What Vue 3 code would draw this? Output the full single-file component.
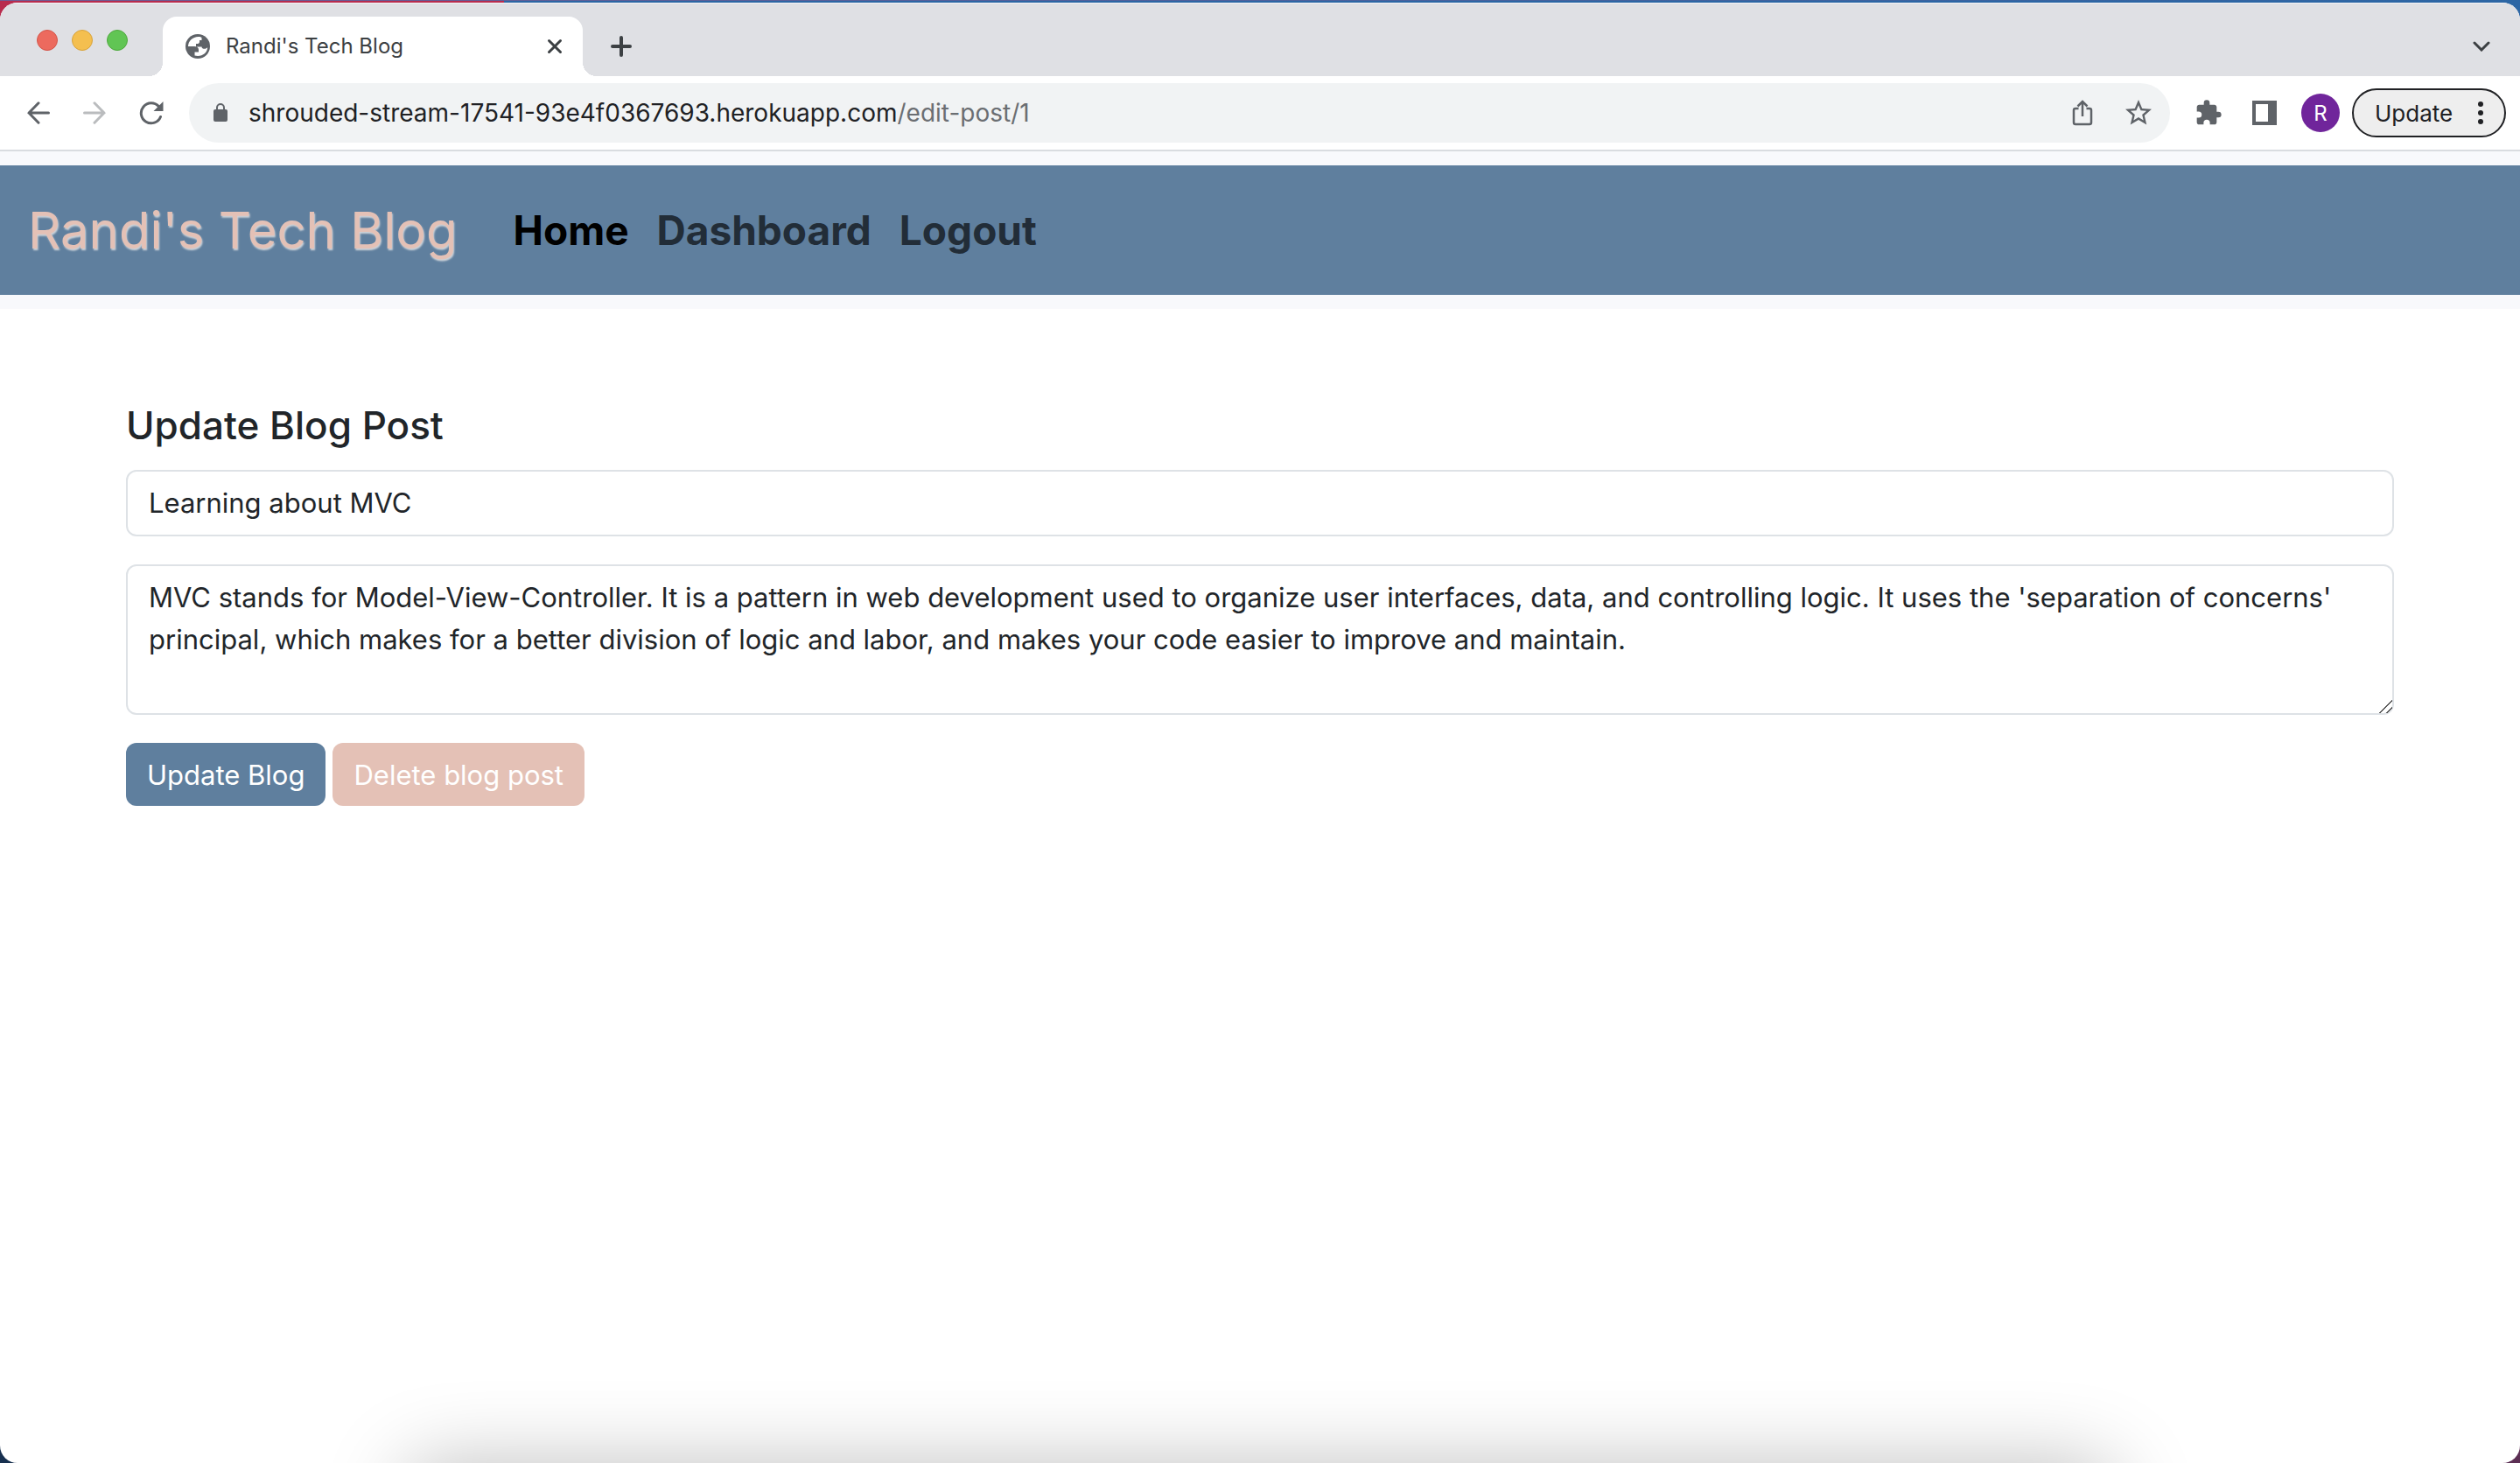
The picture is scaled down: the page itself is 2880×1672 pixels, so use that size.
<script setup>
import { ref } from 'vue'

const title = ref('Learning about MVC')
const body = ref("MVC stands for Model-View-Controller. It is a pattern in web development used to organize user interfaces, data, and controlling logic. It uses the 'separation of concerns' principal, which makes for a better division of logic and labor, and makes your code easier to improve and maintain.")
</script>

<template>
  <div class="desktop">
    <div class="window">
      <header class="tabstrip">
        <div class="lights">
          <button class="light red" aria-label="Close window"></button>
          <button class="light yellow" aria-label="Minimise window"></button>
          <button class="light green" aria-label="Zoom window"></button>
        </div>
        <div class="tab">
          <svg class="globe" viewBox="0 0 28 28" aria-hidden="true">
            <circle cx="14" cy="14" r="14" fill="#5f6368" />
            <path d="M16.500 3C9 2 3 7.500 3 14H10C13 14 15 15.500 15 18V20.500H10.500V24.500C18 26.500 25 22 25.200 15C24 17.500 18.500 17.500 18.500 14.500H12V11C14.500 11.200 16 10.500 16 8.500V7H18.500V4Z" fill="#fff" />
          </svg>
          <span class="tab-title">Randi's Tech Blog</span>
          <button class="icon-btn" aria-label="Close tab">
            <svg width="18" height="18" viewBox="0 0 18 18"><path d="M2.500 2.500L15.500 15.500M15.500 2.500L2.500 15.500" stroke="#3c4043" stroke-width="3" stroke-linecap="round" /></svg>
          </button>
        </div>
        <button class="icon-btn new-tab" aria-label="New tab">
          <svg width="24" height="24" viewBox="0 0 24 24"><path d="M12 2V22M2 12H22" stroke="#3c4043" stroke-width="4" stroke-linecap="round" /></svg>
        </button>
        <button class="icon-btn tab-search" aria-label="Search tabs">
          <svg width="20" height="12" viewBox="0 0 20 12"><path d="M2 2L10 10L18 2" fill="none" stroke="#3c4043" stroke-width="3" stroke-linecap="round" /></svg>
        </button>
      </header>

      <div class="toolbar">
        <div class="nav-icons">
          <button class="icon-btn" aria-label="Back">
            <svg width="26" height="26" viewBox="0 0 26 26"><path d="M24.500 13H2M13 1.800L2 13L13 24.200" fill="none" stroke="#5f6368" stroke-width="3" stroke-linecap="round" /></svg>
          </button>
          <button class="icon-btn" aria-label="Forward">
            <svg width="26" height="26" viewBox="0 0 26 26"><path d="M1.500 13H24M13 1.800L24 13L13 24.200" fill="none" stroke="#babcbe" stroke-width="3" stroke-linecap="round" /></svg>
          </button>
          <button class="icon-btn" aria-label="Reload">
            <svg width="28" height="28" viewBox="0 0 28 28"><path d="M24.500 18.500A11.500 11.500 0 1 1 22.500 6.800" fill="none" stroke="#5f6368" stroke-width="3" stroke-linecap="round" /><path d="M27.500 1V12H16.500Z" fill="#5f6368" /></svg>
          </button>
        </div>
        <div class="omnibox">
          <svg class="lock" width="18" height="22" viewBox="0 0 18 22"><rect x="1" y="7" width="16" height="14" rx="2" fill="#5f6368" /><path d="M5 8V5A4 4 0 0 1 13 5V8" fill="none" stroke="#5f6368" stroke-width="2" /></svg>
          <a class="url" href="#">shrouded-stream-17541-93e4f0367693.herokuapp.com<span class="path">/edit-post/1</span></a>
          <button class="icon-btn" aria-label="Share">
            <svg width="24" height="30" viewBox="0 0 24 30"><path d="M7.500 10H4A2 2 0 0 0 2 12V26A2 2 0 0 0 4 28H20A2 2 0 0 0 22 26V12A2 2 0 0 0 20 10H16.500M12 19V2M6.500 7.500L12 2L17.500 7.500" fill="none" stroke="#5f6368" stroke-width="2.500" /></svg>
          </button>
          <button class="icon-btn star" aria-label="Bookmark">
            <svg width="36" height="36" viewBox="0 0 24 24"><path d="M22 9.240l-7.190-.62L12 2 9.190 8.630 2 9.240l5.460 4.730L5.820 21 12 17.270 18.180 21l-1.630-7.030L22 9.240zM12 15.400l-3.760 2.270 1-4.280-3.320-2.880 4.380-.38L12 6.100l1.710 4.040 4.380.38-3.320 2.880 1 4.280L12 15.400z" fill="#5f6368" /></svg>
          </button>
        </div>
        <div class="actions">
          <button class="icon-btn puzzle" aria-label="Extensions">
            <svg width="32" height="32" viewBox="0 0 24 24"><path d="M20.500 11H19V7c0-1.100-.9-2-2-2h-4V3.500a2.500 2.500 0 0 0-5 0V5H4c-1.100 0-1.990.9-1.990 2v3.800H3.500a2.700 2.700 0 0 1 0 5.400H2V20c0 1.100.9 2 2 2h3.800v-1.500a2.700 2.700 0 0 1 5.400 0V22H17c1.100 0 2-.9 2-2v-4h1.500a2.500 2.500 0 0 0 0-5z" fill="#5f6368" /></svg>
          </button>
          <button class="icon-btn panel" aria-label="Side panel">
            <svg width="28" height="28" viewBox="0 0 28 28"><path d="M0 0H28V28H0ZM4 4V24H18V4Z" fill="#5f6368" fill-rule="evenodd" /></svg>
          </button>
          <button class="avatar" aria-label="Profile">R</button>
          <button class="update">
            Update
            <svg width="6" height="26" viewBox="0 0 6 26"><g fill="#202124"><circle cx="3" cy="3" r="3" /><circle cx="3" cy="13" r="3" /><circle cx="3" cy="23" r="3" /></g></svg>
          </button>
        </div>
      </div>

      <nav class="site-nav">
        <div class="site-bar">
          <a class="brand" href="#">Randi's Tech Blog</a>
          <a class="nav-link active" href="#">Home</a>
          <a class="nav-link" href="#">Dashboard</a>
          <a class="nav-link" href="#">Logout</a>
        </div>
      </nav>

      <main>
        <form @submit.prevent>
          <h1>Update Blog Post</h1>
          <input v-model="title" class="field" type="text" aria-label="Post title" />
          <textarea v-model="body" class="field" rows="3" aria-label="Post content"></textarea>
          <div class="buttons">
            <button class="btn primary" type="submit">Update Blog</button>
            <button class="btn danger" type="button">Delete blog post</button>
          </div>
        </form>
      </main>
      <div class="dock-shadow"></div>
    </div>
  </div>
</template>

<style>
body {
  margin: 0;
}
</style>

<style scoped>
* {
  box-sizing: border-box;
}
.desktop {
  min-height: 100vh;
  padding-top: 3px;
  display: flex;
  background:
    linear-gradient(90deg, #6f5c93, #2c66a4) top / 100% 1px no-repeat,
    linear-gradient(90deg, #b82c4e 0 20%, #2c66a4 20%) top / 100% 50% no-repeat,
    linear-gradient(90deg, #17304f 50%, #5c2f54 50%) bottom / 100% 50% no-repeat;
  font-family: Inter, "Liberation Sans", sans-serif;
  color: #212529;
}
.window {
  position: relative;
  flex: 1;
  display: flex;
  flex-direction: column;
  overflow: hidden;
  border-radius: 20px;
  background: #fff;
}
button {
  font-family: inherit;
  border: 0;
  padding: 0;
  margin: 0;
}
a {
  color: inherit;
  text-decoration: none;
}
svg {
  display: block;
  flex: none;
}
.icon-btn {
  background: none;
  display: flex;
  flex: none;
}
.tabstrip {
  height: 84px;
  display: flex;
  align-items: flex-end;
  background: #dfe0e4;
  border-top: 1px solid #f2f3f5;
}
.lights {
  display: flex;
  gap: 16px;
  padding: 0 40px 29px 42px;
}
.light {
  width: 24px;
  height: 24px;
  border-radius: 50%;
}
.red { background: #ec6a5e; border: 1px solid #d35549; }
.yellow { background: #f4bf4f; border: 1px solid #d8a33c; }
.green { background: #61c554; border: 1px solid #4fa83e; }
.tab {
  position: relative;
  width: 480px;
  height: 68px;
  padding: 0 23px 0 26px;
  display: flex;
  align-items: center;
  border-radius: 16px 16px 0 0;
  background: #fff;
}
.tab::before,
.tab::after {
  content: "";
  position: absolute;
  bottom: 0;
  width: 16px;
  height: 16px;
}
.tab::before {
  right: 100%;
  background: radial-gradient(circle at 0 0, transparent 16px, #fff 16px);
}
.tab::after {
  left: 100%;
  background: radial-gradient(circle at 100% 0, transparent 16px, #fff 16px);
}
.globe {
  width: 28px;
  height: 28px;
}
.tab-title {
  flex: 1;
  margin-left: 18px;
  font-size: 24px;
  line-height: 28px;
  color: #3c4043;
}
.new-tab {
  margin: 0 0 22px 32px;
}
.tab-search {
  margin: 0 34px 28px auto;
}
.toolbar {
  height: 86px;
  display: flex;
  align-items: center;
  padding: 0 16px 0 31px;
  border-bottom: 2px solid #d9dce0;
}
.nav-icons {
  display: flex;
  align-items: center;
  gap: 38px;
  width: 185px;
}
.omnibox {
  flex: 1;
  height: 68px;
  display: flex;
  align-items: center;
  padding: 0 18px 0 27px;
  border-radius: 34px;
  background: #f1f3f4;
}
.url {
  flex: 1;
  margin-left: 23px;
  font-size: 28px;
  color: #202124;
}
.path {
  color: #6b6e72;
}
.star {
  margin-left: 34px;
}
.actions {
  display: flex;
  align-items: center;
  gap: 14px;
  margin-left: 28px;
}
.puzzle {
  margin-right: 20px;
}
.panel {
  margin-right: 14px;
}
.avatar {
  width: 44px;
  height: 44px;
  border-radius: 50%;
  background: #70259b;
  color: #fff;
  font-size: 24px;
}
.update {
  width: 176px;
  height: 56px;
  display: flex;
  align-items: center;
  justify-content: space-between;
  padding: 0 24px;
  border: 2px solid #202124;
  border-radius: 28px;
  background: #eee;
  color: #202124;
  font-size: 26px;
}
.site-nav {
  padding: 16px 0;
  background: #f8f9fc;
}
.site-bar {
  height: 148px;
  display: flex;
  align-items: center;
  gap: 32px;
  padding: 0 32px;
  background: #5f7f9e;
}
.brand {
  margin-right: 32px;
  font-size: 58px;
  color: #e4c1b6;
  text-shadow: 1px 2px 2px #ced4da;
}
.nav-link {
  font-size: 46px;
  font-weight: 700;
  color: #222d38;
}
.nav-link.active {
  color: #000;
}
main {
  padding: 104px 144px 0;
}
form {
  display: flex;
  flex-direction: column;
}
h1 {
  margin: 0 0 22px;
  font-size: 44px;
  line-height: 58px;
  font-weight: 500;
}
.field {
  width: 100%;
  margin: 0 0 32px;
  padding: 12px 24px;
  border: 2px solid #dee2e6;
  border-radius: 12px;
  background: #fff;
  color: #212529;
  font-family: inherit;
  font-size: 31px;
  line-height: 48px;
}
.field::-webkit-resizer {
  background: linear-gradient(135deg, transparent 47%, #555 47% 54%, transparent 54% 74%, #555 74% 81%, transparent 81%);
}
.buttons {
  display: flex;
  gap: 8px;
}
.btn {
  height: 72px;
  padding: 0 24px;
  border-radius: 12px;
  color: #fff;
  font-size: 31px;
}
.primary { background: #5f7f9e; }
.danger { background: #e4c1b6; }
.dock-shadow {
  position: absolute;
  left: 16%;
  right: 16%;
  top: 100%;
  height: 100px;
  border-radius: 40px;
  box-shadow: 0 0 90px rgba(0, 0, 0, 0.25);
}
</style>
